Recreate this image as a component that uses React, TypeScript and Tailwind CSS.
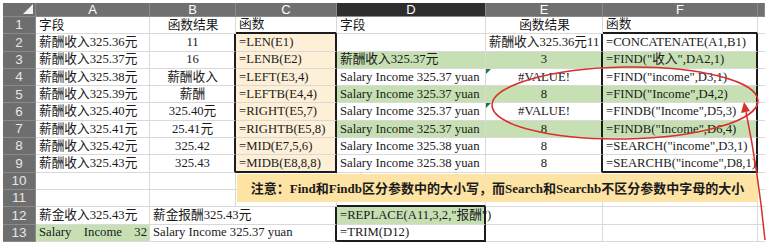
import React from "react";

type Cell = {
  t?: React.ReactNode;
  center?: boolean;
  bg?: string;
  r?: "grid" | "box" | "none";
  b?: "grid" | "box";
  err?: boolean;
};

const GREEN = "bg-[#c6e0b4]";
const PEACH = "bg-[#fdf0d7]";

const rightCls = {
  grid: "border-r border-r-[#d9d9d9]",
  box: "border-r-2 border-r-[#1c1c1c]",
  none: "border-r-0",
};
const bottomCls = {
  grid: "border-b border-b-[#d9d9d9]",
  box: "border-b-2 border-b-[#1c1c1c]",
};

const sal37 = "Salary Income 325.37 yuan";
const sal38 = "Salary Income 325.38 yuan";

const rows: Cell[][] = [
  [
    { t: "字段" },
    { t: "函数结果", center: true },
    { t: "函数", b: "box" },
    { t: "字段" },
    { t: "函数结果", center: true },
    { t: "函数", b: "box" },
  ],
  [
    { t: "薪酬收入325.36元" },
    { t: "11", center: true, r: "box" },
    { t: "=LEN(E1)", bg: PEACH, r: "box" },
    {},
    { t: "薪酬收入325.36元11", center: true, r: "box" },
    { t: "=CONCATENATE(A1,B1)", r: "box" },
  ],
  [
    { t: "薪酬收入325.37元" },
    { t: "16", center: true, r: "box" },
    { t: "=LENB(E2)", bg: PEACH, r: "box" },
    { t: "薪酬收入325.37元", bg: GREEN },
    { t: "3", center: true, bg: GREEN, r: "box" },
    { t: '=FIND("收入",DA2,1)', bg: GREEN, r: "box" },
  ],
  [
    { t: "薪酬收入325.38元" },
    { t: "薪酬收入", center: true, r: "box" },
    { t: "=LEFT(E3,4)", bg: PEACH, r: "box" },
    { t: sal37 },
    { t: "#VALUE!", center: true, r: "box", err: true },
    { t: '=FIND("income",D3,1)', r: "box" },
  ],
  [
    { t: "薪酬收入325.39元" },
    { t: "薪酬", center: true, r: "box" },
    { t: "=LEFTB(E4,4)", bg: PEACH, r: "box" },
    { t: sal37, bg: GREEN },
    { t: "8", center: true, bg: GREEN, r: "box" },
    { t: '=FIND("Income",D4,2)', bg: GREEN, r: "box" },
  ],
  [
    { t: "薪酬收入325.40元" },
    { t: "325.40元", center: true, r: "box" },
    { t: "=RIGHT(E5,7)", bg: PEACH, r: "box" },
    { t: sal37 },
    { t: "#VALUE!", center: true, r: "box", err: true },
    { t: '=FINDB("Income",D5,3)', r: "box" },
  ],
  [
    { t: "薪酬收入325.41元" },
    { t: "25.41元", center: true, r: "box" },
    { t: "=RIGHTB(E5,8)", bg: PEACH, r: "box" },
    { t: sal37, bg: GREEN },
    { t: "8", center: true, bg: GREEN, r: "box" },
    { t: '=FINDB("Income",D6,4)', bg: GREEN, r: "box" },
  ],
  [
    { t: "薪酬收入325.42元" },
    { t: "325.42", center: true, r: "box" },
    { t: "=MID(E7,5,6)", bg: PEACH, r: "box" },
    { t: sal38 },
    { t: "8", center: true, r: "box" },
    { t: '=SEARCH("income",D3,1)', r: "box" },
  ],
  [
    { t: "薪酬收入325.43元" },
    { t: "325.43", center: true, r: "box" },
    { t: "=MIDB(E8,8,8)", bg: PEACH, r: "box", b: "box" },
    { t: sal38 },
    { t: "8", center: true, r: "box" },
    { t: '=SEARCHB("income",D8,1)', r: "box", b: "box" },
  ],
  [{}, {}, {}, {}, {}, {}],
  [{}, {}, {}, { b: "box" }, {}, {}],
  [
    { t: "薪金收入325.43元" },
    { t: "薪金报酬325.43元", r: "none" },
    { r: "box" },
    { t: '=REPLACE(A11,3,2,"报酬")', bg: GREEN, r: "box" },
    {},
    {},
  ],
  [
    {
      t: (
        <span className="flex w-full justify-between">
          <span>Salary</span>
          <span>Income</span>
          <span>32</span>
        </span>
      ),
      bg: GREEN,
    },
    { t: sal37, r: "none" },
    { r: "box" },
    { t: "=TRIM(D12)", r: "box", b: "box" },
    {},
    {},
  ],
];

const letters = ["A", "B", "C", "D", "E", "F", ""];

function GridCell({ cell }: { cell: Cell }) {
  return (
    <div
      className={[
        "relative flex items-center whitespace-nowrap pl-[3px] pr-[2px]",
        cell.center ? "justify-center" : "justify-start",
        cell.bg ?? "",
        rightCls[cell.r ?? "grid"],
        bottomCls[cell.b ?? "grid"],
      ].join(" ")}
    >
      {cell.err && (
        <span className="absolute left-0 top-0 h-0 w-0 border-t-[5px] border-r-[5px] border-t-[#1f7a3a] border-r-transparent" />
      )}
      {cell.t}
    </div>
  );
}

export default function App() {
  return (
    <div className="relative h-[251px] w-[778px] overflow-hidden bg-white pl-[3px] pt-[3px] font-['Liberation_Serif','Noto_Sans_CJK_SC',serif] text-[12.7px] leading-none text-[#1a1a1a]">
      <div className="grid w-[765px] grid-cols-[33px_114px_86px_101px_149px_117px_155px_7px] grid-rows-[14px_repeat(13,17.3px)]">
        {/* column headers */}
        <div className="relative border-r border-b border-[#8a8a8a] bg-[#6e6e6e]">
          <svg className="absolute bottom-[2px] right-[2px]" width="10" height="10" viewBox="0 0 10 10">
            <polygon points="10,0 10,10 0,10" fill="#f2f2f2" />
          </svg>
        </div>
        {letters.map((l, i) => (
          <div
            key={i}
            className={
              l === "D"
                ? "flex items-center justify-center border-r border-b border-[#8a8a8a] bg-[#2e2e2e] font-['Liberation_Sans',sans-serif] text-[13px] text-white"
                : "flex items-center justify-center border-r border-b border-[#8a8a8a] bg-[#707070] font-['Liberation_Sans',sans-serif] text-[13px] text-white"
            }
          >
            {l}
          </div>
        ))}

        {rows.map((row, ri) => (
          <React.Fragment key={ri}>
            <div className="flex items-center justify-center border-r border-b border-[#8a8a8a] bg-[#6e6e6e] font-['Liberation_Sans',sans-serif] text-[13.5px] text-[#e6e6e6]">
              {ri + 1}
            </div>
            {row.map((cell, ci) => (
              <GridCell key={ci} cell={cell} />
            ))}
            <div className="border-b border-b-[#d9d9d9]" />
          </React.Fragment>
        ))}
      </div>

      {/* floating note shape */}
      <div className="absolute left-[237px] top-[174px] flex h-[28px] w-[521px] items-center justify-center bg-[#fde3a4] text-[13px] font-bold text-[#1a1a1a]">
        注意：Find和Findb区分参数中的大小写，而Search和Searchb不区分参数中字母的大小
      </div>

      {/* red annotation */}
      <svg className="pointer-events-none absolute left-0 top-0" width="778" height="251" viewBox="0 0 778 251">
        <ellipse cx="625" cy="103" rx="133" ry="36" fill="none" stroke="#d8312c" strokeWidth="1.5" transform="rotate(-1 625 103)" />
        <path d="M765 240 Q758 170 746 112" fill="none" stroke="#d8312c" strokeWidth="1.5" />
        <polygon points="744,102 741,113 750,111" fill="#d8312c" />
      </svg>
    </div>
  );
}
